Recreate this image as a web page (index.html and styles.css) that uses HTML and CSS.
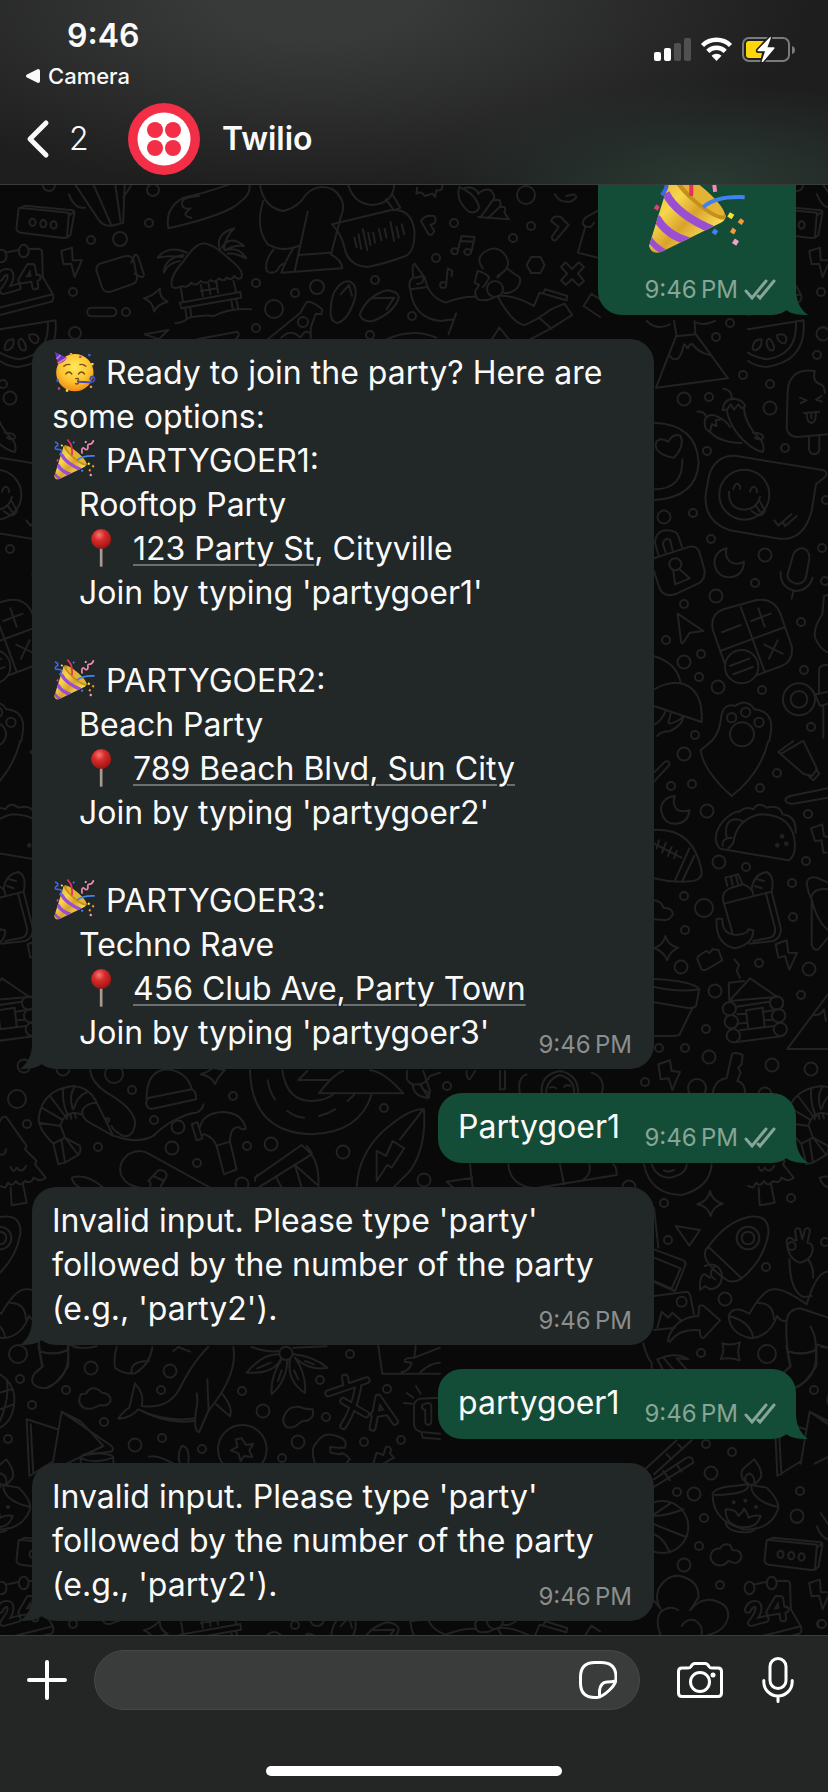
FILE: index.html
```html
<!DOCTYPE html>
<html lang="en">
<head>
<meta charset="utf-8">
<meta name="viewport" content="width=device-width, initial-scale=1">
<title>Twilio</title>
<link rel="stylesheet" href="styles.css">
</head>
<body>
<svg class="sprite" aria-hidden="true">
  <defs>
    <linearGradient id="gold" x1="0" y1="0" x2="1" y2="1">
      <stop offset="0" stop-color="#e0a92c"/><stop offset=".35" stop-color="#f7d64c"/><stop offset=".55" stop-color="#d9a32b"/><stop offset=".8" stop-color="#fbe45a"/><stop offset="1" stop-color="#d99a20"/>
    </linearGradient>
    <radialGradient id="skin" cx=".5" cy=".35" r=".65">
      <stop offset="0" stop-color="#ffe95c"/><stop offset=".6" stop-color="#fdc431"/><stop offset="1" stop-color="#f08c12"/>
    </radialGradient>
    <radialGradient id="ball" cx=".4" cy=".3" r=".7">
      <stop offset="0" stop-color="#f47a72"/><stop offset=".4" stop-color="#d92c2c"/><stop offset="1" stop-color="#9c1414"/>
    </radialGradient>
    <clipPath id="cone"><path d="M706 742L772 528Q784 512 826 550Q900 610 935 650Q936 664 922 672L744 759Q714 770 706 742Z"/></clipPath>
  </defs>
  <symbol id="popper" viewBox="694 476 311 290">
    <path fill="url(#gold)" d="M706 742L772 528Q784 512 826 550Q900 610 935 650Q936 664 922 672L744 759Q714 770 706 742Z"/>
    <g clip-path="url(#cone)" fill="none" stroke="#9a4fd2" stroke-width="24">
      <path d="M756 584Q790 650 898 694"/><path d="M728 656Q758 710 826 728"/><path d="M704 716Q722 746 760 764" stroke-width="18"/>
    </g>
    <ellipse cx="855" cy="592" rx="104" ry="26" transform="rotate(41 855 592)" fill="#c68f1c"/>
    <ellipse cx="862" cy="590" rx="90" ry="20" transform="rotate(41 862 590)" fill="#e3b333"/>
    <g fill="none" stroke-width="12">
      <path stroke="#3f83f3" d="M868 626Q905 592 992 596"/>
      <path stroke="#e5305f" d="M832 592Q836 520 812 496Q802 486 800 480"/>
      <path stroke="#f489b4" d="M904 580Q896 540 912 538L930 552Q948 552 944 524Q944 510 962 512Q978 510 984 484"/>
      <path stroke="#3f66e0" d="M744 590Q768 560 752 552L718 548Q706 534 728 524Q742 512 712 496"/>
    </g>
    <path fill="#e0407a" d="M728 617l10 8-6 12-12-8z"/>
    <path fill="#f3e13c" d="M948 641l13 8-8 13-13-8zM758 514l11 6-7 11-11-7z"/>
    <path fill="#f39a35" d="M980 659l11 8-8 12-12-8zM956 687l11 8-7 13-12-8z"/>
    <path fill="#3f83f3" d="M902 690l11 8-8 12-12-8zM842 492l10 6-7 11-10-7z"/>
    <path fill="#f4a0cc" d="M963 720l12 8-8 13-13-8zM926 488l12 6-6 12-12-6z"/>
  </symbol>
  <symbol id="partyface" viewBox="96 60 132 123">
    <circle cx="163" cy="125" r="56" fill="url(#skin)"/>
    <path fill="#5a3fc8" d="M103 63L139 80Q132 94 112 99Z"/>
    <path stroke="#f06bb0" stroke-width="5" d="M108 84L120 72M112 97L137 82"/>
    <g fill="none" stroke="#7a4a12" stroke-width="4" stroke-linecap="round">
      <path d="M130 106Q138 98 148 101M178 101Q188 98 196 106M136 129Q145 117 154 129M174 129Q183 117 192 129"/>
      <path d="M166 143Q176 141 174 147Q168 151 175 154Q172 161 165 158"/>
    </g>
    <path stroke="#3c50b4" stroke-width="6" fill="none" d="M172 152L204 154Q222 156 222 143Q220 134 212 138Q206 146 214 148"/>
    <path fill="#e63b5c" d="M176 74h7v7h-7zM112 169h7v7h-7z"/><path fill="#3f66e0" d="M203 69h7v7h-7zM108 145h7v7h-7z"/><path fill="#f3e13c" d="M212 96h7v7h-7zM136 175h7v7h-7z"/><path fill="#f39a35" d="M148 66h7v7h-7zM208 164h7v7h-7z"/>
  </symbol>
  <symbol id="pin" viewBox="177 588 132 123">
    <path stroke="#a89a92" stroke-width="8" d="M242 648V707"/>
    <circle cx="242" cy="624" r="30" fill="url(#ball)"/>
  </symbol>
  <symbol id="ticks" viewBox="0 0 32 22">
    <path fill="none" stroke="currentColor" stroke-width="3" stroke-linecap="round" d="M2 12l6 7L22 2M14 17l2 2L30 2"/>
  </symbol>
  <symbol id="tail" viewBox="0 0 24 26">
    <path fill="currentColor" d="M12 0C12 12 16 20 24 26C14 26 7 25 2 21L0 14Z"/>
  </symbol>
</svg>

<div class="app">
  <header class="top">
    <div class="status">
      <div class="status-left">
        <time class="clock">9:46</time>
        <a class="return" href="#"><svg width="14" height="14" viewBox="0 0 14 14"><path fill="currentColor" d="M0 7Q0 6 1 5.500L12 0Q14 0 14 2V12Q14 14 12 14L1 8.500Q0 8 0 7Z"/></svg>Camera</a>
      </div>
      <svg class="status-icons" width="142" height="28" viewBox="0 0 142 28" role="img" aria-label="Signal, Wi-Fi, battery charging">
        <g fill="#fff"><rect y="16" width="7" height="9" rx="2"/><rect x="10" y="12" width="7" height="13" rx="2"/></g>
        <g fill="#505050"><rect x="20" y="7" width="7" height="18" rx="2"/><rect x="30" y="2" width="7" height="23" rx="2"/></g>
        <g fill="none" stroke="#fff" stroke-width="4.500"><path d="M48.500 9.500a20 20 0 0 1 28 0"/><path d="M53.800 15.300a12.500 12.500 0 0 1 17.400 0"/></g>
        <path fill="#fff" d="M62.500 25l-5-5.200a7.400 7.400 0 0 1 10 0z"/>
        <rect x="89" y="2" width="46" height="23" rx="6" fill="none" stroke="#7b7b7b" stroke-width="2"/>
        <path fill="#7b7b7b" d="M138 10q3 1 3 4t-3 4z"/>
        <path fill="#ffd60a" d="M95 5h15l-8 9q-1 2 2 3h4l-1 5H95q-3 0-3-3V8q0-3 3-3z"/>
        <path fill="#fff" stroke="#1f1f1f" stroke-width="1.500" d="M116 0L103 13.500q-1 2 1 2.500h6l-3 9q0 3 3 1L121 13q1-2-1-2.500h-5.500l3-8q0-3-1.500-2.500z"/>
      </svg>
    </div>
    <nav class="bar">
      <button class="back" aria-label="Back, 2 unread chats"><svg width="24" height="40" viewBox="0 0 24 40"><path d="M20 4L4 20L20 36" fill="none" stroke="currentColor" stroke-width="5" stroke-linecap="round" stroke-linejoin="round"/></svg><span>2</span></button>
      <svg class="avatar" width="72" height="72" viewBox="0 0 72 72" aria-hidden="true">
        <circle cx="36" cy="36" r="36" fill="#f22f46"/><circle cx="36" cy="36" r="26.500" fill="#fff"/>
        <g fill="#f22f46"><circle cx="27" cy="27" r="8"/><circle cx="45" cy="27" r="8"/><circle cx="27" cy="45" r="8"/><circle cx="45" cy="45" r="8"/></g>
      </svg>
      <h1>Twilio</h1>
    </nav>
  </header>

  <main class="chat">
    <svg class="wallpaper" viewBox="0 184 828 1451" preserveAspectRatio="xMidYMin slice" aria-hidden="true">
      <defs>
        <g id="beach">
          <g transform="translate(0 180) scale(.3827 .3333)">
            <path d="M50 80L180 95L175 168Q172 172 165 171L55 155Q43 153 43 142L48 88Q49 80 50 80ZM50 82L66 74L190 88Q196 90 194 98L184 162L175 170M180 104L193 92"/>
            <ellipse cx="85" cy="124" rx="8" ry="11"/><ellipse cx="113" cy="128" rx="8" ry="11"/><ellipse cx="140" cy="132" rx="8" ry="11"/>
            <path d="M14 215L50 206M75 204L100 203Q110 204 110 214L112 290M110 285L138 340Q142 355 135 362L0 402M138 340L0 380"/>
            <ellipse cx="62" cy="210" rx="13" ry="19"/><ellipse cx="4" cy="225" rx="13" ry="19"/>
            <path class="fat" d="M0 290Q6 270 24 274Q36 290 8 330L46 318M76 258L56 298L98 290M84 258L92 316"/><path class="fat-in" d="M0 290Q6 270 24 274Q36 290 8 330L46 318M76 258L56 298L98 290M84 258L92 316"/>
            <path d="M160 210L188 200L190 238L214 238L195 288L186 248L166 250Z"/>
            <path d="M262 248L325 226Q345 222 350 240L358 290Q358 305 345 310L290 332Q272 336 266 318L252 268Q251 252 262 248ZM343 245L352 222Q358 220 361 228L376 280Q376 290 368 288L352 278"/>
            <path d="M450 318Q440 290 480 240Q510 188 532 187Q560 190 600 235Q640 270 630 290Q622 298 612 285Q605 300 592 290Q585 305 572 292Q560 308 550 297Q540 312 525 300Q512 318 500 305Q490 322 475 315Q462 325 450 318ZM472 318L478 360M610 300L617 332M470 365L628 333L630 350L474 382ZM484 382L488 412M497 380L500 408M604 355L608 382M617 353L622 380M525 312L530 345M545 308L550 340M565 300L570 335M525 330L568 322M458 427Q480 424 490 412Q530 400 560 405Q600 380 656 385"/>
            <path d="M575 205Q560 160 612 142Q590 165 585 205M580 200Q600 160 638 195Q610 190 588 208Q625 195 643 232Q615 215 595 218M488 215Q440 190 412 230Q440 222 478 228M480 222Q430 230 428 275Q440 245 470 240"/>
            <path d="M376 352Q400 345 418 322Q415 350 438 362Q410 370 403 392Q400 362 376 352Z"/>
            <rect x="228" y="380" width="76" height="26" rx="12"/>
            <path d="M0 445L145 418Q155 540 48 558Q20 556 0 540M125 424Q130 520 50 535Q20 530 0 515M12 500Q14 475 35 475Q38 500 20 508Q12 508 12 500ZM48 485Q52 470 58 475Q72 495 66 508Q52 512 48 485ZM76 462Q95 455 101 472Q100 490 88 486Q76 478 76 462Z"/>
            <path d="M180 40Q195 85 222 80M190 0L260 120Q275 140 300 132L322 125L326 0M240 0L290 130M300 0L315 120M322 50L350 0"/>
            <path d="M440 142Q430 80 480 50Q540 35 600 10M440 142Q600 100 630 60Q655 40 652 12M520 45Q460 50 480 80Q490 85 498 82Q470 105 500 110"/>
            <path d="M680 15Q690 80 740 90Q780 80 800 40Q830 5 870 25Q910 60 890 110L865 220Q895 240 894 262L735 275Q750 230 765 205M688 60Q665 140 700 190Q740 215 780 195M804 92L770 270M782 222L862 215M715 205Q690 240 697 270Q710 282 725 268Q730 250 742 248"/>
            <path d="M868 130L1020 88Q1075 80 1083 150Q1085 210 1060 225Q1000 250 960 258Q910 255 900 200Q895 165 868 130ZM926 170L932 198M937 160L944 204M948 145L960 208M962 155L968 192M975 155L980 185M990 145L997 178M1005 143L1010 170M1020 122L1030 180M1036 138L1042 170M1050 130L1056 160"/>
            <path d="M910 12Q925 70 975 72Q1028 65 1030 12M1008 55L1030 88L1046 80L1025 40M1088 38Q1100 28 1110 45L1130 38L1137 48L1140 28Q1160 30 1155 12M1088 38L1090 20"/>
            <path d="M1200 18Q1190 60 1225 92Q1245 100 1252 80Q1245 40 1200 18ZM1215 20Q1245 15 1250 40M1252 35Q1285 10 1292 50Q1275 80 1255 110M1292 58Q1310 50 1308 75L1275 112M1310 78Q1325 75 1318 95L1330 115L1250 108M1450 40Q1460 65 1490 62Q1515 50 1500 40L1480 45"/>
            <path d="M1100 120Q1110 100 1135 105Q1145 125 1125 132L1135 150Q1130 165 1120 160ZM1440 120Q1445 102 1465 108L1486 132L1452 178Q1440 180 1443 165L1460 138Z"/>
            <path d="M1196 210L1206 165L1240 168L1232 212M1202 180L1238 182M1166 310L1170 262L1182 270L1180 285"/><ellipse cx="1188" cy="211" rx="9" ry="9"/><ellipse cx="1222" cy="213" rx="9" ry="9"/><ellipse cx="1158" cy="312" rx="8" ry="9"/>
            <path d="M1388 228L1412 228L1423 252L1412 276L1388 276L1376 252ZM1466 258L1478 244L1495 264L1512 244L1526 258L1510 278L1526 300L1512 314L1495 294L1478 312L1466 298L1482 278Z"/>
            <path d="M875 330Q895 295 915 302Q935 315 928 350Q910 420 880 426Q862 420 864 390Q865 350 875 330ZM890 340L912 312L920 345M940 400Q960 345 1010 328Q1040 330 1042 350Q1030 395 975 420Q945 425 940 400ZM975 352L1030 350L1010 385"/>
            <path d="M1083 248Q1075 250 1080 290Q1065 300 1072 325Q1080 410 1150 420L1185 415M1192 397L1172 460M1083 248L1110 290Q1120 350 1165 365Q1210 345 1245 348M1072 325L1118 318M1085 290L1105 285Q1110 310 1090 308M1248 270Q1270 275 1278 290Q1270 310 1262 318M1248 270L1240 305L1252 312L1242 330Q1240 345 1250 356Q1270 362 1290 350M1262 262Q1240 230 1270 210Q1300 190 1322 225Q1340 260 1300 285M1300 290L1325 262L1345 280Q1370 290 1352 320Q1335 340 1315 335M1300 345Q1340 340 1395 375L1410 335L1480 358L1482 345L1425 325L1420 335M1300 345Q1340 430 1370 432Q1400 420 1440 385L1475 368L1495 402L1440 442L1410 412"/>
            <path d="M1568 408L1525 375L1545 338L1568 355M1568 232L1510 215L1530 135Q1515 130 1530 110L1568 85M1530 135Q1545 145 1552 125M700 475L785 395L800 365Q810 355 842 385L840 400L825 398L812 440L812 475M735 470Q760 440 785 470Q800 440 812 460M378 460L440 447L415 475ZM515 475L620 452Q630 462 615 475M1010 475Q1080 440 1140 470M1285 475L1305 440L1330 475M1385 475L1440 442"/>
          </g>
          <path class="dot" d="M149 222h0M91 239h0M73 291h0M126 311h0M256 282h0M295 292h0M256 327h0M375 279h0M436 257h0M454 222h0M531 225h0M513 237h0M412 315h0M370 334h0"/>
          <path class="dot-in" d="M149 222h0M91 239h0M73 291h0M126 311h0M256 282h0M295 292h0M256 327h0M375 279h0M436 257h0M454 222h0M531 225h0M513 237h0M412 315h0M370 334h0"/>
          <circle cx="49" cy="184" r="6"/><circle cx="153" cy="189" r="6"/><circle cx="120" cy="238" r="7"/><circle cx="75" cy="332" r="6"/><circle cx="317" cy="286" r="7"/><circle cx="274" cy="308" r="9"/><circle cx="526" cy="194" r="9"/><circle cx="495" cy="288" r="8"/><circle cx="303" cy="321" r="5"/>
        </g>
        <g id="east">
          <g transform="translate(620 320) scale(.3333)">
            <path d="M108 200L168 46L228 40L324 172ZM162 0L170 46M224 0L226 40M80 0Q110 30 150 10M150 105Q160 120 175 112Q185 100 192 70Q198 72 203 82Q210 65 218 70Q235 95 270 102M230 5Q250 15 285 0"/>
            <path d="M585 150Q505 140 503 215L500 320Q502 345 530 348L624 340M585 150Q575 180 600 190Q612 190 615 215M540 230L560 238L542 246M605 225L588 236L606 242M552 276L598 272M560 276Q560 305 575 306Q590 300 587 276M574 278V292M567 348V385Q570 400 583 400Q597 398 598 385V345"/>
            <path d="M310 203Q335 205 336 233M308 268Q310 235 340 233Q368 235 376 255L365 262L355 250L342 266L332 250L322 265ZM320 266Q325 300 350 335Q390 385 428 393Q435 380 425 360Q375 310 372 262M232 272Q250 270 258 285M298 290Q270 272 255 295Q250 325 270 333L275 310L290 315L287 298L300 296M270 333Q300 365 365 366M298 290Q320 300 330 318M398 335Q430 335 430 350Q420 360 405 350"/>
            <path d="M102 305Q230 310 236 425Q230 530 102 537M102 505Q190 505 187 415M162 410Q105 400 107 370Q112 345 145 362Q160 335 182 345Q195 375 162 410Z"/>
            <path d="M350 405L612 448Q625 455 615 468L588 490L575 570Q550 665 470 652L330 628Q250 600 257 520L268 460Q290 400 350 405ZM327 512Q325 565 373 566Q410 565 420 528M340 505Q343 488 352 488Q360 490 361 504M390 512Q394 496 403 497Q411 500 411 514M395 570L410 580Q425 590 435 570L420 542M408 555L420 572M463 598L475 614L514 580M490 604L495 616L530 585"/><circle cx="373" cy="521" r="75"/>
            <path d="M102 712L200 680Q225 670 237 690L253 745Q258 770 240 785L165 820Q130 830 118 800L102 750M115 702L105 665Q108 625 145 628Q170 630 175 645L186 678M137 694L129 670Q130 655 143 653Q152 655 152 665L158 688M160 748L165 790L209 772L178 744"/><circle cx="166" cy="730" r="18"/>
            <path d="M320 682Q285 690 283 725Q290 770 330 769Q370 765 372 722Q350 735 330 722Q312 705 320 682ZM520 700Q530 680 550 682Q570 690 568 712L558 770Q550 790 528 788Q500 780 503 760ZM482 753Q480 800 525 810Q565 810 578 770M520 812L515 833M173 878L250 930L210 935L188 967Q184 968 183 960Z"/>
            <path d="M310 865L410 837Q460 830 480 875L515 975Q522 1020 485 1035L412 1062M310 865Q270 880 278 925L315 1030M362 858L433 1050M300 990L495 918M306 934L362 912M394 900L452 878M415 862L434 917M433 971L488 998M473 958L447 1013M330 1035L388 1013M340 1060L398 1038"/><circle cx="365" cy="1037" r="50"/>
            <path d="M102 1006Q170 1025 182 1085M102 1105Q150 1080 180 1087Q250 1100 245 1203L102 1155M102 1212Q125 1200 138 1168M145 1205Q150 1190 152 1178M150 1208Q180 1200 190 1185M112 1245Q120 1232 150 1230Q185 1215 190 1188"/>
            <path d="M275 1260Q300 1235 303 1190Q310 1145 345 1155Q380 1130 403 1165Q460 1170 453 1230L448 1260"/><circle cx="335" cy="1190" r="14"/><circle cx="377" cy="1174" r="14"/><circle cx="417" cy="1204" r="14"/><circle cx="366" cy="1240" r="36"/>
            <circle cx="537" cy="1135" r="48"/><circle cx="537" cy="1135" r="25"/>
            <path d="M580 1110L600 1155L624 1148M588 1120L624 1112M597 1120V1045Q600 1030 624 1032M610 1155V1250M612 825L607 880Q580 920 585 950Q600 985 624 995M612 825L624 822"/>
          </g>
          <g transform="translate(620 740) scale(.3333)">
            <path d="M242 28Q250 90 335 165Q420 100 445 0M242 28L275 0M475 33L550 98L575 105L592 85L550 0M475 33L520 0M484 38L545 2M563 103L580 118L598 98L588 84M624 142L510 165Q492 172 498 182Q505 190 520 188L624 170M102 95L135 62Q150 58 148 72L102 122"/>
            <path d="M165 165Q125 170 123 205Q130 250 168 248Q205 245 208 208Q185 215 170 205Q155 185 165 165ZM102 267Q220 260 245 390Q248 415 220 420Q160 427 102 412M208 322L165 418M223 345L187 420M102 308L184 350M117 298L110 322M138 305L126 335M155 318L144 345M170 330L162 352"/>
            <path d="M340 305Q350 235 420 220Q520 220 525 310Q525 350 505 358L300 323Q270 290 310 240Q340 210 360 212Q375 195 400 205Q415 180 440 200Q480 190 487 220Q530 225 527 275M320 290Q310 240 345 235Q360 235 370 242M308 315Q305 290 335 290M340 305Q335 315 325 322"/><circle cx="486" cy="286" r="4"/><circle cx="472" cy="313" r="4"/><circle cx="499" cy="308" r="4"/>
            <path d="M573 262L607 250L612 285L624 288M573 262L585 300L605 298L610 335L620 335M312 488L338 578M312 488L455 452L482 560Q485 590 460 600L388 608M438 458L465 560Q468 585 450 590L400 600M312 488Q300 455 330 442L368 430Q400 440 400 462M322 435L316 410L355 400L368 430M333 408L338 432M348 405L354 428M395 445Q400 400 440 393Q465 405 455 452M405 435L425 442M412 415L432 420M290 533L307 533Q305 580 350 582Q385 578 385 565L400 568Q400 610 345 622Q285 610 290 533Z"/>
            <path d="M235 645L258 630L268 636L278 625L295 627L307 658L255 688L245 686L232 655ZM467 610L500 598L505 635L531 636L508 686L495 645L475 650ZM136 585Q145 615 175 620Q150 630 142 658Q130 630 102 622Q130 612 136 585ZM560 425Q565 405 590 410L624 425M560 425Q565 460 575 475Q590 540 624 568M573 470Q580 440 624 445M575 475V610Q580 630 595 625L624 590M102 478Q125 480 130 500Q160 500 158 522Q145 540 130 537L102 535"/>
            <path d="M102 714Q220 720 238 745L228 795Q220 803 205 801L102 784M102 738Q180 755 238 745M218 800L178 882Q170 887 102 884M328 780L390 712L472 768L328 780L326 725L372 720M348 797L450 782M352 820L378 818M352 848L380 845M378 808L428 800L434 858L385 865ZM432 812L458 808M434 838L458 836M360 868L462 855M345 904L485 886M343 655L357 672L350 690L360 710"/>
            <circle cx="328" cy="803" r="20"/><circle cx="334" cy="842" r="20"/><circle cx="340" cy="884" r="20"/><circle cx="470" cy="786" r="20"/><circle cx="476" cy="824" r="20"/><circle cx="481" cy="865" r="20"/>
            <path d="M502 924L624 760M502 924H624M580 822Q600 825 612 806L618 840M115 970L150 958L155 990L180 993L157 1047L146 1012L122 1015ZM278 1058Q285 1015 320 1012L336 940Q345 932 368 942L365 970L355 980L362 995L352 1020Q375 1025 376 1058"/>
          </g>
          <g transform="translate(640 1180) scale(.3333)">
            <path d="M210 30Q217 60 248 68Q218 76 212 105Q203 75 172 70Q205 60 210 30ZM107 135L180 147L148 194ZM205 197Q260 120 330 107Q390 100 385 160Q370 240 305 292Q290 305 265 300Q190 250 195 215Q197 203 205 197L305 292M195 255Q230 240 245 275Q250 320 210 325L195 315L180 327Q178 280 195 280L210 290M225 255Q200 280 225 295"/><circle cx="324" cy="171" r="34"/><circle cx="324" cy="171" r="19"/>
            <path d="M440 185Q440 165 455 172Q460 180 470 178L465 150Q470 135 480 145L487 175L495 145Q508 135 510 150L502 185Q520 185 518 210Q510 240 480 245Q445 235 440 185M448 235Q450 330 490 348L515 345M505 235Q522 260 519 290M500 370Q430 320 400 325Q370 325 328 398Q280 370 266 405Q270 460 335 472Q390 465 411 405Q425 425 440 418M355 366Q400 365 402 415M266 405Q330 420 340 470M500 370Q530 270 564 272M440 418Q445 385 480 382L564 410M440 418Q435 480 452 555L432 575M447 512Q490 525 528 505Q535 590 468 618M528 490L564 500M512 437Q530 470 527 505"/><circle cx="455" cy="195" r="12"/>
            <path d="M83 480Q100 410 175 405L178 375Q185 370 195 378L240 418L190 472Q178 470 180 448Q120 440 90 482ZM42 205L130 238Q140 245 135 255L105 330L42 303M42 230L122 262L95 323L42 300M42 345L140 332Q150 335 152 350L162 400M42 447L105 440M52 440L65 392L85 410L97 395L122 418M42 80L55 200M247 487Q272 495 300 484Q290 510 299 538Q270 528 242 534Q255 510 247 487ZM10 487Q20 530 35 545V565M52 535Q110 510 145 535L110 532L140 565M52 535L68 565M70 530L100 565"/><circle cx="125" cy="362" r="15"/>
            <path d="M15 865L110 778M42 880L155 778M42 895L140 830Q160 825 160 845L42 918M70 870L90 898M110 850L125 872M80 820L95 835M115 790L128 805M42 1005Q80 1005 130 985M42 1030L138 1068M42 1060Q70 1070 90 1115M90 968L42 1000"/><circle cx="67" cy="1038" r="78"/>
            <path d="M218 945Q215 920 280 915L325 910L333 912L380 920Q420 960 414 985Q390 1050 310 1045Q220 1020 218 945ZM225 942Q330 940 325 910M333 912Q335 960 414 978M325 908Q295 890 308 865Q325 850 343 835Q370 870 362 890Q350 910 333 912M318 905Q310 885 328 877Q345 885 343 905M257 985Q290 985 295 1005Q310 990 312 983Q325 1000 325 1010Q345 1000 362 1005Q350 1045 300 1038Q255 1030 257 985ZM257 1020Q255 1050 310 1054Q345 1055 348 1040"/><circle cx="281" cy="964" r="3"/><circle cx="316" cy="959" r="3"/><circle cx="348" cy="978" r="3"/>
            <path d="M225 1150Q205 1135 215 1115Q225 1100 240 1103Q250 1085 270 1092L278 1108Q305 1105 304 1130Q295 1150 280 1145L265 1140Q250 1160 225 1150ZM62 1283Q45 1260 55 1225Q80 1180 120 1185Q180 1200 175 1250L150 1288Q180 1250 220 1258Q270 1270 264 1310Q255 1350 205 1362M62 1363Q45 1320 60 1295Q90 1270 115 1288M125 1335Q140 1310 165 1318Q190 1335 185 1360M42 1260L62 1283"/>
          </g>
        </g>
        <g id="west">
          <g transform="translate(0 1020) scale(.3333)">
            <path d="M160 368Q110 320 117 285Q130 205 220 195Q270 200 290 245L340 345L260 300Q240 280 250 262Q265 245 290 245M160 368L195 350L240 375Q245 390 235 402L195 425L175 430ZM195 350L235 402M185 360L195 425M117 305L182 315M125 260L185 295M150 225L195 285M190 200Q185 250 205 285M225 197Q205 220 218 265M265 212Q230 225 222 262M180 315Q190 280 220 275L245 280M182 315L195 350M200 280V295M212 280L214 293M224 278L228 292"/><circle cx="323" cy="297" r="5"/>
            <path d="M270 147Q275 185 320 215Q400 260 406 305Q400 350 370 345Q340 330 335 315M345 345Q410 370 460 345Q500 305 540 290Q570 275 590 275Q610 265 610 250M440 235Q438 150 500 145Q560 150 576 205M448 230L575 205Q590 210 588 235L455 264Q440 262 438 245Q440 235 448 230ZM602 160Q630 150 640 140L675 148Q655 165 645 190Q635 165 602 160Z"/>
            <path d="M575 310L592 303L607 352L590 358ZM600 318Q610 275 670 273Q725 275 738 322Q730 330 715 318Q690 320 690 362L710 445L672 460L650 375Q640 350 615 340L605 343M650 374L690 362M750 148Q755 335 935 340Q1080 335 1115 220M847 148Q860 240 935 240Q985 238 1005 215M803 178Q810 215 825 235M862 270Q885 288 912 290M958 285Q985 278 1005 265M1043 240L1062 222M957 217H1210Q1150 150 1110 148M957 217Q1000 160 1030 150M895 177H990M895 177L922 150"/>
            <path d="M1222 150Q1215 185 1240 190Q1275 195 1290 165L1320 155M1238 192Q1240 215 1260 225L1285 232Q1295 215 1270 205L1265 195M1070 500Q1075 400 1150 330Q1230 260 1272 265Q1280 380 1230 450L1180 500M1268 268L1200 355M1130 480L1130 390L1158 405L1178 360L1213 382L1175 440L1162 432ZM765 470L905 372L935 400L775 500M765 480Q765 465 775 460M920 375L935 395M935 400Q960 440 955 500M828 468L845 500M885 432L905 500M885 432L950 490"/>
            <path d="M630 500L450 400Q420 380 385 400Q350 430 365 465Q380 495 420 500M450 500Q455 480 445 480L475 448Q500 445 500 465L480 500M460 465L492 480M215 470Q260 455 310 500M215 470Q220 490 240 500"/>
            <path d="M0 300Q10 280 20 290L80 375L75 385L110 420L105 430L137 470Q125 485 100 470Q95 490 75 480Q60 500 48 480Q35 500 25 485L15 500L0 495M32 500L35 553L80 545L68 485M0 400Q15 405 18 385M32 438Q40 460 50 440Q65 460 78 435"/>
          </g>
          <g transform="translate(0 1330) scale(.3333)">
            <path d="M115 45L127 108Q90 130 98 155Q110 175 145 170Q170 160 205 105V45M122 62Q160 75 205 58M220 48Q260 55 290 46M350 48Q340 85 345 110Q370 130 405 127Q450 100 457 48M395 125Q390 90 447 90M520 60L535 48L570 62"/>
            <path d="M355 263Q370 240 388 230L405 157Q435 190 425 225Q500 235 535 180Q580 90 625 48M355 263Q390 262 415 235Q500 275 585 262M425 240Q500 280 580 270M700 48Q715 130 625 240L597 304Q580 300 588 240Q595 210 590 187M622 145L626 240M648 220L690 256Q700 230 668 190"/>
            <path d="M838 70Q790 65 740 125Q820 130 842 85M845 85Q810 140 815 190Q860 150 862 88M870 85Q860 150 915 186Q920 130 885 80M880 70Q940 75 982 110Q930 120 890 85M755 48Q800 65 838 60M880 50L980 46M772 112L812 95M834 150L845 118M895 145L882 118M942 100L915 90"/><circle cx="858" cy="67" r="20"/>
            <path d="M1135 45L1147 128H1320M1247 45L1243 80Q1210 80 1215 92L1235 95Q1230 120 1205 123M1243 80L1320 50M1260 125Q1290 95 1320 95M1320 200L1260 203Q1240 210 1242 230V280Q1245 300 1265 303L1320 308M1265 305L1268 320L1320 324M1248 165L1262 188M1220 186L1240 200M1212 216L1236 218"/>
            <path class="fat" d="M1035 140L1040 165M985 187L1100 148M1075 165Q1065 230 1030 285M1030 210L1098 250M1118 290L1135 200L1185 272M1122 250L1162 243M1275 228L1285 225V272"/><path class="fat-in" d="M1035 140L1040 165M985 187L1100 148M1075 165Q1065 230 1030 285M1030 210L1098 250M1118 290L1135 200L1185 272M1122 250L1162 243M1275 228L1285 225V272"/>
            <path d="M250 230Q230 215 243 190Q265 188 260 183Q280 160 305 185Q330 185 332 208Q325 228 300 222Q270 240 250 230ZM860 288Q840 270 858 245Q870 225 900 228Q915 235 938 235Q945 260 920 270Q910 268 900 275Q880 295 860 288ZM80 265L173 295M80 265L88 435L160 390M92 280L100 430M185 242L158 398M185 242L335 345Q345 360 330 362L255 372M185 242L240 270Q270 300 310 345L200 398M242 398V380Q245 365 290 367Q340 370 340 380V398M242 382Q290 400 340 380M448 377Q470 370 520 398M545 345Q530 370 540 398M545 345Q570 345 565 398"/>
            <circle cx="727" cy="355" r="73"/>
            <path d="M725 322L738 342L760 338L748 358L757 378L733 375L722 390L716 368L693 358L712 348L708 325ZM945 398Q930 350 950 335Q970 300 1010 315Q1045 325 1035 350L1015 350L990 348L992 365L1020 370Q1030 360 1050 385L1040 395M1120 398L1130 365L1150 372L1158 348Q1180 345 1170 368L1182 380L1150 398M0 130Q45 160 43 210Q40 270 0 290M0 185L35 175M0 235L40 220M20 145Q30 200 0 270"/>
          </g>
        </g>
        <path id="small-dots" d="M716 336h0M730 322h0M817 354h0M743 374h0M770 383h0M709 396h0M707 450h0M785 447h0M693 512h0M711 538h0M755 582h0M822 547h0M826 499h0M684 603h0M666 639h0M801 621h0M825 580h0M701 653h0M699 676h0M762 689h0M804 669h0M811 726h0M695 734h0M671 785h0M692 783h0M777 772h0M760 787h0M808 813h0M746 866h0M806 860h0M684 895h0M792 882h0M793 916h0M685 929h0M759 962h0M801 994h0M706 1028h0M659 1047h0M685 1047h0M645 1081h0M132 1089h0M233 1095h0M27 1123h0M154 1119h0M98 1146h0M197 1162h0M247 1145h0M384 1107h0M447 1085h0M664 1202h0M791 1197h0M668 1239h0M825 1241h0M20 1378h0M66 1389h0M32 1404h0M161 1389h0M242 1390h0M350 1353h0M320 1379h0M326 1416h0M387 1388h0M364 1441h0M401 1439h0M8 1438h0M104 1421h0M162 1437h0M202 1448h0M282 1457h0M766 1266h0M701 1352h0M814 1389h0M706 1443h0M732 1451h0M677 1491h0M704 1517h0M800 1490h0M699 1545h0M720 1584h0M822 1623h0M3 383h0M10 548h0"/>
        <path id="big-dots" d="M823 333h0M684 398h0M770 407h0M664 516h0M765 554h0M716 595h0M684 661h0M718 686h0M684 753h0M707 810h0M719 861h0M681 966h0M809 968h0M715 990h0M709 1056h0M772 1064h0M811 1068h0M765 1093h0M24 1065h0M63 1068h0M178 1126h0M172 1147h0M271 1143h0M242 1183h0M343 1151h0M424 1179h0M629 1186h0M91 1367h0M170 1370h0M263 1410h0M298 1441h0M135 1444h0M725 1298h0M711 1472h0M694 1493h0M797 1515h0M684 1564h0M10 397h0"/>
      </defs>
      <use href="#beach"/><use href="#beach" x="748"/><use href="#beach" y="1332"/><use href="#beach" x="748" y="1332"/>
      <use href="#east"/><use href="#east" x="-748"/>
      <use href="#west"/><use href="#west" x="748"/>
      <g transform="translate(420 1070) scale(.3333)">
        <path d="M365 68Q360 10 420 0Q475 10 475 68M378 68Q380 25 420 12Q465 25 462 68M300 68Q290 20 320 10M545 68Q560 20 515 5M390 50Q400 45 408 52M432 48Q440 38 450 45M240 0V55H255V0M140 0Q138 25 150 25L165 0M265 280Q270 345 345 352L590 312Q590 285 580 280M420 280L432 340M508 280Q515 310 490 325M150 280L158 350M80 332L158 320M80 332L100 350M672 280Q690 370 785 372Q870 350 875 280M695 280Q710 320 750 320Q800 310 800 280M732 298Q745 305 762 297M0 40L25 80L30 60L10 0"/>
      </g>
      <use href="#big-dots" class="dot wide"/><use href="#big-dots" class="dot-in wide"/>
      <use href="#small-dots" class="dot"/><use href="#small-dots" class="dot-in"/>
      <circle cx="704" cy="907" r="9"/><circle cx="697" cy="1087" r="9"/><circle cx="114" cy="1073" r="9"/><circle cx="17" cy="1098" r="9"/><circle cx="18" cy="1353" r="9"/><circle cx="767" cy="1353" r="9"/>
    </svg>

    <article class="bubble sent sticker">
      <svg class="big-emoji" role="img" aria-label="party popper"><use href="#popper"/></svg>
      <div class="meta"><time>9:46&#8201;PM</time><svg class="ticks" role="img" aria-label="Delivered"><use href="#ticks"/></svg></div>
      <svg class="tail" aria-hidden="true"><use href="#tail"/></svg>
    </article>

    <article class="bubble received">
      <div class="text">
        <p><svg class="emoji" role="img" aria-label="partying face"><use href="#partyface"/></svg> Ready to join the party? Here are some options:</p>
        <p><svg class="emoji" role="img" aria-label="party popper"><use href="#popper"/></svg> PARTYGOER1:</p>
        <p class="indent">Rooftop Party</p>
        <p class="indent"><svg class="emoji" role="img" aria-label="round pushpin"><use href="#pin"/></svg> <a href="#">123 Party St</a>, Cityville</p>
        <p class="indent">Join by typing 'partygoer1'</p>
        <br>
        <p><svg class="emoji" role="img" aria-label="party popper"><use href="#popper"/></svg> PARTYGOER2:</p>
        <p class="indent">Beach Party</p>
        <p class="indent"><svg class="emoji" role="img" aria-label="round pushpin"><use href="#pin"/></svg> <a href="#">789 Beach Blvd, Sun City</a></p>
        <p class="indent">Join by typing 'partygoer2'</p>
        <br>
        <p><svg class="emoji" role="img" aria-label="party popper"><use href="#popper"/></svg> PARTYGOER3:</p>
        <p class="indent">Techno Rave</p>
        <p class="indent"><svg class="emoji" role="img" aria-label="round pushpin"><use href="#pin"/></svg> <a href="#">456 Club Ave, Party Town</a></p>
        <p class="indent">Join by typing 'partygoer3'</p>
      </div>
      <div class="meta"><time>9:46&#8201;PM</time></div>
      <svg class="tail" aria-hidden="true"><use href="#tail"/></svg>
    </article>

    <article class="bubble sent">
      <p class="text">Partygoer1</p>
      <div class="meta"><time>9:46&#8201;PM</time><svg class="ticks" role="img" aria-label="Delivered"><use href="#ticks"/></svg></div>
      <svg class="tail" aria-hidden="true"><use href="#tail"/></svg>
    </article>

    <article class="bubble received">
      <p class="text">Invalid input. Please type 'party' followed by the number of the party (e.g., 'party2').</p>
      <div class="meta"><time>9:46&#8201;PM</time></div>
      <svg class="tail" aria-hidden="true"><use href="#tail"/></svg>
    </article>

    <article class="bubble sent">
      <p class="text">partygoer1</p>
      <div class="meta"><time>9:46&#8201;PM</time><svg class="ticks" role="img" aria-label="Delivered"><use href="#ticks"/></svg></div>
      <svg class="tail" aria-hidden="true"><use href="#tail"/></svg>
    </article>

    <article class="bubble received">
      <p class="text">Invalid input. Please type 'party' followed by the number of the party (e.g., 'party2').</p>
      <div class="meta"><time>9:46&#8201;PM</time></div>
      <svg class="tail" aria-hidden="true"><use href="#tail"/></svg>
    </article>
  </main>

  <footer class="bottom">
    <form class="composer">
      <button type="button" aria-label="Attach"><svg width="40" height="40" viewBox="0 0 40 40"><path d="M20 2V38M2 20H38"/></svg></button>
      <div class="field">
        <input type="text" aria-label="Message">
        <button type="button" aria-label="Stickers"><svg class="thin" width="38" height="38" viewBox="0 0 38 38"><path d="M37 18V16Q37 1.500 22 1.500H16Q1.500 1.500 1.500 16V22Q1.500 36.500 16 36.500H18Q23 36 30 29.500T37 18ZM20.500 36Q20.500 33 20.500 29.500Q21.500 21.500 28 21Q33 21 36.500 20"/></svg></button>
      </div>
      <button type="button" aria-label="Camera"><svg class="thin" width="46" height="36" viewBox="0 0 46 36"><path d="M5 6H11Q13 6 14 4.500Q15.500 1.500 18 1.500H28Q30.500 1.500 32 4.500Q33 6 35 6H41Q44.500 6 44.500 9.500V31Q44.500 34.500 41 34.500H5Q1.500 34.500 1.500 31V9.500Q1.500 6 5 6Z"/><circle cx="23" cy="20" r="9.500"/><circle cx="36" cy="13" r="2.500" fill="#fff" stroke="none"/></svg></button>
      <button type="button" aria-label="Record voice message"><svg class="thin" width="32" height="46" viewBox="0 0 32 46"><rect x="8" y="1.500" width="16" height="30" rx="8"/><path d="M1.800 23.500V25a14.200 14 0 0 0 28.400 0V23.500M16 39V44.500"/></svg></button>
    </form>
    <div class="home"></div>
  </footer>
</div>
</body>
</html>
```
FILE: styles.css
```css
* { box-sizing: border-box; margin: 0; padding: 0; }

body {
  background: #090909;
  color: #fafafa;
  font: 32px/44px Inter, "Liberation Sans", sans-serif;
}

a { color: inherit; }

button {
  display: flex;
  align-items: center;
  border: 0;
  background: none;
  color: inherit;
  font: inherit;
}

.sprite { position: absolute; width: 0; height: 0; }

.app {
  display: flex;
  flex-direction: column;
  height: 100vh;
  overflow: hidden;
}

/* Header */
.top {
  flex: none;
  padding: 14px 32px 9px 26px;
  border-bottom: 1px solid #3a3b3b;
  background:
    radial-gradient(ellipse 34% 55% at 85% 100%, #2a3a33, transparent),
    radial-gradient(ellipse 60% 105% at 38% 0, #383a39 20%, transparent),
    #1e1e1e;
}

.status { display: flex; justify-content: space-between; }
.status-icons { margin-top: 22px; }
.clock { display: block; margin-left: 41px; font-weight: 600; }

.return {
  display: flex;
  align-items: center;
  gap: 8px;
  font-size: 22px;
  font-weight: 500;
  line-height: 36px;
  text-decoration: none;
}

.bar { display: flex; align-items: center; margin-top: 9px; }
.back { gap: 19px; width: 102px; font-weight: 300; }
.bar h1 { margin-left: 22px; font-size: 32px; font-weight: 600; }

/* Conversation */
.chat {
  position: relative;
  flex: 1;
  display: flex;
  flex-direction: column;
  justify-content: flex-end;
  gap: 24px;
  min-height: 0;
  padding: 0 32px 14px;
  overflow: hidden;
}

.wallpaper {
  position: absolute;
  inset: 0;
  width: 100%;
  height: 100%;
  fill: none;
  stroke: #222;
  stroke-width: 2px;
  stroke-linejoin: round;
  stroke-linecap: round;
}

.wallpaper * { vector-effect: non-scaling-stroke; }
.wallpaper .fat { stroke-width: 8px; }
.wallpaper .fat-in { stroke: #090909; stroke-width: 4px; }
.wallpaper .dot { stroke-width: 10px; }
.wallpaper .dot-in { stroke: #090909; stroke-width: 6px; }
.wallpaper .dot.wide { stroke-width: 15px; }
.wallpaper .dot-in.wide { stroke-width: 11px; }

.bubble {
  position: relative;
  flex: none;
  display: grid;
  padding: 12px 22px 14px 20px;
  border-radius: 24px;
}

.received {
  align-self: flex-start;
  width: min(622px, 100%);
  background: #222727;
}

.received .text,
.received .meta { grid-area: 1 / 1; }

.sent {
  align-self: flex-end;
  grid-template-columns: 1fr auto;
  min-width: 358px;
  padding-right: 20px;
  background: #144d37;
}

.sticker {
  grid-template-columns: 1fr;
  justify-items: center;
  row-gap: 25px;
  min-width: 198px;
}

.meta {
  place-self: end;
  display: flex;
  align-items: center;
  gap: 6px;
  color: #8b8e8e;
  font-size: 24px;
  line-height: 20px;
}

.sent .meta { color: #87a598; }
.ticks { width: 32px; height: 22px; }
.indent { padding-left: 27px; }

.text a {
  text-decoration-color: #6b6f6f;
  text-decoration-thickness: 2px;
  text-underline-offset: 4px;
}

.emoji { width: 45px; height: 41px; vertical-align: -8px; }
.big-emoji { width: 104px; height: 97px; }

.tail {
  position: absolute;
  right: -12px;
  bottom: 0;
  width: 24px;
  height: 26px;
  color: #144d37;
}

.received .tail {
  right: auto;
  left: -12px;
  color: #222727;
  transform: scaleX(-1);
}

/* Composer */
.bottom {
  flex: none;
  padding: 14px 0 16px;
  border-top: 1px solid #3a3b3b;
  background: #242625;
}

.composer { display: flex; align-items: center; padding: 0 34px 0 27px; }
.composer svg { fill: none; stroke: #fff; stroke-width: 4px; stroke-linecap: round; stroke-linejoin: round; }
.composer .thin { stroke-width: 3px; }

.field {
  flex: 1;
  min-width: 0;
  display: flex;
  align-items: center;
  height: 60px;
  margin: 0 37px 0 27px;
  padding: 0 22px 0 24px;
  border: 1px solid #474848;
  border-radius: 30px;
  background: #3a3b3b;
}

.field input {
  flex: 1;
  min-width: 0;
  border: 0;
  outline: 0;
  background: none;
  color: inherit;
  font: inherit;
}

.composer > button:last-child { margin-left: 39px; }

.home {
  width: 296px;
  height: 10px;
  margin: 56px auto 0;
  border-radius: 5px;
  background: #fff;
}
```
